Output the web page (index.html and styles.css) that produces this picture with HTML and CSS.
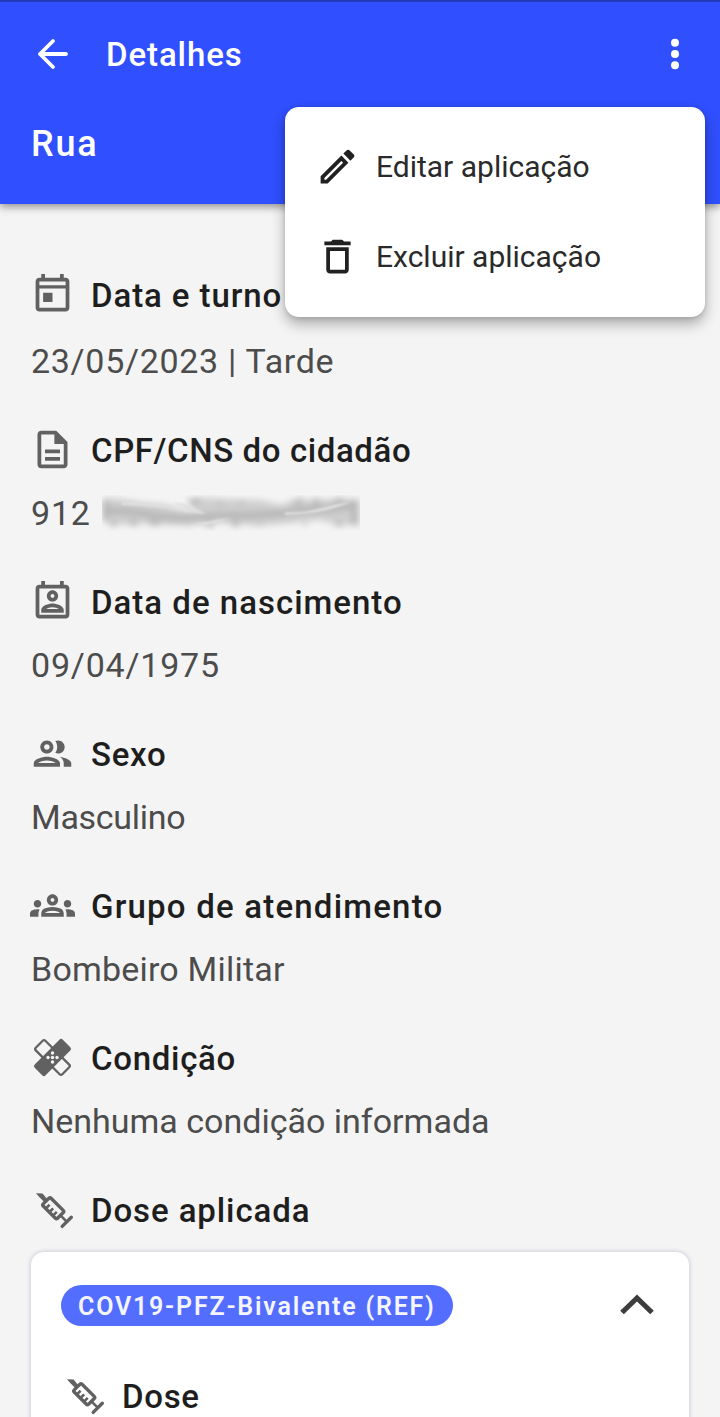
FILE: index.html
```html
<!DOCTYPE html>
<html lang="pt-BR">
<head>
<meta charset="utf-8">
<title>Detalhes</title>
<link rel="stylesheet" href="styles.css">
</head>
<body>
<svg class="defs" width="0" height="0" aria-hidden="true">
  <symbol id="syringe" viewBox="0 0 24 24">
    <g transform="translate(12 12) rotate(45)" fill="none" stroke="currentColor" stroke-width="1.8">
      <path d="M-12.4 .1L-9.8-2.3L-5.5-1.9V.3H-9.5Z" fill="currentColor" stroke="none"/>
      <rect x="-5.6" y="-3.7" width="10.8" height="5.9" rx=".8"/>
      <path d="M-2.9 1.9V-.7M-.2 1.9V-.7M2.5 1.9V-.7M5.2-.8H10.3" stroke-width="1.4"/>
      <path d="M10-4.2V2.7" stroke-linecap="round"/>
    </g>
  </symbol>
</svg>
<main class="screen">
  <header class="header">
    <div class="toolbar">
      <svg class="back" viewBox="0 0 32 32"><path d="M29 16H3M16 3L3 16L16 29"/></svg>
      <h1 class="title">Detalhes</h1>
      <svg class="more" viewBox="0 0 10 32"><circle cx="5" cy="4.7" r="4"/><circle cx="5" cy="16" r="4"/><circle cx="5" cy="27.2" r="4"/></svg>
    </div>
    <div class="place">Rua</div>
  </header>

  <div class="menu">
    <div class="item">
      <svg class="icon" viewBox="0 0 24 24"><path d="M3 17.25V21h3.75L17.81 9.94l-3.75-3.75L3 17.25zM5.92 19H5v-.92l9.06-9.06.92.92L5.92 19zM20.71 5.63l-2.34-2.34c-.2-.2-.45-.29-.71-.29s-.51.1-.7.29l-1.83 1.83 3.75 3.75 1.83-1.83c.39-.39.39-1.02 0-1.41z"/></svg>
      <span class="edit">Editar aplicação</span>
    </div>
    <div class="item">
      <svg class="icon" viewBox="0 0 24 24"><path d="M6 19c0 1.1.9 2 2 2h8c1.1 0 2-.9 2-2V7H6v12zM8 9h8v10H8V9zm7.5-5l-1-1h-5l-1 1H5v2h14V4h-3.5z"/></svg>
      <span class="delete">Excluir aplicação</span>
    </div>
  </div>

  <div class="content">
    <section class="field first">
      <div class="label">
        <svg class="icon" viewBox="0 0 24 24"><path fill-rule="evenodd" d="M19 3h-1V1h-2v2H8V1H6v2H5c-1.1 0-2 .9-2 2v14c0 1.1.9 2 2 2h14c1.1 0 2-.9 2-2V5c0-1.1-.9-2-2-2zM5 19V8.8h14V19zM5 7V5h14v2zM7 11h5v5H7z"/></svg>
        <span class="t1">Data e turno</span>
      </div>
      <div class="value v1">23/05/2023 | Tarde</div>
    </section>
    <section class="field">
      <div class="label">
        <svg class="icon" viewBox="0 0 24 24"><path d="M8 16h8v2H8zm0-4h8v2H8zm6-10H6c-1.1 0-2 .9-2 2v16c0 1.1.89 2 1.99 2H18c1.1 0 2-.9 2-2V8l-6-6zm4 18H6V4h7v5h5v11z"/></svg>
        <span class="t2">CPF/CNS do cidadão</span>
      </div>
      <div class="value v2">912
        <svg class="redacted" viewBox="0 0 258 36">
          <defs><filter id="smear" x="-10%" y="-40%" width="120%" height="180%"><feGaussianBlur stdDeviation="3"/></filter><filter id="soft"><feGaussianBlur stdDeviation="1.2"/></filter></defs>
          <g filter="url(#smear)">
            <path d="M0 4C18 1 30 8 60 9C75 12 78 16 92 16L84 4L104 3L158 5L180 10L190 5L258 4V31L232 29L218 25L180 29L154 31L112 27L87 31L44 29L10 30L0 26Z" fill="#cfcfcf"/>
            <path d="M4 6V24M88 7L98 5M118 7V10M139 6V9M192 8L201 5M211 8L217 5M233 7L240 4M252 6V29M9 29H14M28 27L35 29M48 28H57M104 29H112M130 29H137M158 29V31M203 28V30M234 29H240" fill="none" stroke="#b3b3b3" stroke-width="5"/>
            <path d="M5 16C38 14 55 25 87 23C125 18 155 23 190 17C212 13 234 16 251 9" fill="none" stroke="#b9b9b9" stroke-width="8"/>
          </g>
          <path d="M20 7C51 7 74 11 91 16L71 8C82 6 95 14 104 19C84 18 63 10 20 10M184 17C210 19 226 9 249 7C232 15 210 19 182 20M92 30C105 26 118 24 130 23C118 27 108 30 98 31" fill="#e0e0e0" filter="url(#soft)"/>
        </svg>
      </div>
    </section>
    <section class="field">
      <div class="label">
        <svg class="icon" viewBox="0 0 24 24"><path d="M19 3h-1V1h-2v2H8V1H6v2H5c-1.1 0-2 .9-2 2v14c0 1.1.9 2 2 2h14c1.1 0 2-.9 2-2V5c0-1.1-.9-2-2-2zm0 16H5V5h14v14zm-7-7c1.65 0 3-1.35 3-3s-1.35-3-3-3-3 1.35-3 3 1.35 3 3 3zm0-4c.55 0 1 .45 1 1s-.45 1-1 1-1-.45-1-1 .45-1 1-1zm6 8.58c0-2.5-3.97-3.58-6-3.58s-6 1.08-6 3.58V18h12v-1.42zM8.48 16c.74-.51 2.23-1 3.52-1s2.78.49 3.52 1H8.48z"/></svg>
        <span class="t3">Data de nascimento</span>
      </div>
      <div class="value v3">09/04/1975</div>
    </section>
    <section class="field">
      <div class="label">
        <svg class="icon" viewBox="0 0 24 24"><path d="M9 13.75c-2.34 0-7 1.17-7 3.5V19h14v-1.75c0-2.33-4.66-3.5-7-3.5zM4.34 17c.84-.58 2.87-1.25 4.66-1.25s3.82.67 4.66 1.25H4.34zM9 12c1.93 0 3.5-1.57 3.5-3.5S10.93 5 9 5 5.5 6.57 5.5 8.5 7.07 12 9 12zm0-5c.83 0 1.5.67 1.5 1.5S9.83 10 9 10s-1.5-.67-1.5-1.5S8.17 7 9 7zm7.04 6.81c1.16.84 1.96 1.96 1.96 3.44V19h4v-1.75c0-2.02-3.5-3.17-5.96-3.44zM15 12c1.93 0 3.5-1.57 3.5-3.5S16.93 5 15 5c-.54 0-1.04.13-1.5.35.63.89 1 1.98 1 3.15s-.37 2.26-1 3.15c.46.22.96.35 1.5.35z"/></svg>
        <span class="t4">Sexo</span>
      </div>
      <div class="value v4">Masculino</div>
    </section>
    <section class="field">
      <div class="label">
        <svg class="icon" viewBox="0 0 24 24"><path d="M4 13c1.1 0 2-.9 2-2s-.9-2-2-2-2 .9-2 2 .9 2 2 2zm1.13 1.1C4.76 14.04 4.39 14 4 14c-.99 0-1.93.21-2.78.58C.48 14.9 0 15.62 0 16.43V18h4.5v-1.61c0-.83.23-1.61.63-2.29zM20 13c1.1 0 2-.9 2-2s-.9-2-2-2-2 .9-2 2 .9 2 2 2zm4 3.43c0-.81-.48-1.53-1.22-1.85-.85-.37-1.79-.58-2.78-.58-.39 0-.76.04-1.13.1.4.68.63 1.46.63 2.29V18H24v-1.57zM16.24 13.65c-1.17-.52-2.61-.9-4.24-.9s-3.07.39-4.24.9C6.68 14.13 6 15.21 6 16.39V18h12v-1.61c0-1.18-.68-2.26-1.76-2.74zM8.07 16c.09-.23.13-.39.91-.69.97-.38 1.99-.56 3.02-.56s2.05.18 3.02.56c.77.3.81.46.91.69H8.07zM12 8c.55 0 1 .45 1 1s-.45 1-1 1-1-.45-1-1 .45-1 1-1m0-2c-1.66 0-3 1.34-3 3s1.34 3 3 3 3-1.34 3-3-1.34-3-3-3z"/></svg>
        <span class="t5">Grupo de atendimento</span>
      </div>
      <div class="value v5">Bombeiro Militar</div>
    </section>
    <section class="field">
      <div class="label">
        <svg class="icon" viewBox="0 0 24 24">
          <g transform="translate(12 12) rotate(45)"><rect x="-10" y="-3.6" width="20" height="7.2" rx="1" fill="none" stroke="currentColor" stroke-width="1.2"/></g>
          <g transform="translate(12 12) rotate(-45)"><rect x="-10.6" y="-4.1" width="21.2" height="8.2" rx="1.3"/></g>
          <g fill="#f4f4f4"><circle cx="12" cy="12" r=".9"/><circle cx="12" cy="9.6" r=".9"/><circle cx="12" cy="14.4" r=".9"/><circle cx="9.6" cy="12" r=".9"/><circle cx="14.4" cy="12" r=".9"/></g>
        </svg>
        <span class="t6">Condição</span>
      </div>
      <div class="value v6">Nenhuma condição informada</div>
    </section>
    <section class="dose">
      <div class="label">
        <svg class="icon"><use href="#syringe"/></svg>
        <span class="t7">Dose aplicada</span>
      </div>
      <div class="card">
        <div class="card-head">
          <span class="chip">COV19-PFZ-Bivalente (REF)</span>
          <svg class="chevron" viewBox="0 0 34 22"><path d="M2 18.5L17 4L32 18.5"/></svg>
        </div>
        <div class="label">
          <svg class="icon"><use href="#syringe"/></svg>
          <span class="t8">Dose</span>
        </div>
      </div>
    </section>
  </div>
</main>
</body>
</html>
```
FILE: styles.css
```css
* { box-sizing: border-box; }
body { margin: 0; font-family: Roboto, "Liberation Sans", sans-serif; background: #f4f4f4; color: #1e1e1e; }
.defs { position: absolute; }
.screen { position: relative; width: 720px; height: 1417px; overflow: hidden; }
svg { display: block; flex: none; }
span, .title, .place, .value { white-space: nowrap; }

.header { height: 204px; padding: 22px 30px 0 37px; background: #304ffe; border-top: 2px solid #253ab8; box-shadow: 0 3px 8px rgba(0, 0, 0, .4); color: #fff; }
.toolbar { display: flex; align-items: center; height: 60px; }
.back { width: 32px; height: 32px; fill: none; stroke: #fff; stroke-width: 3.8; stroke-linecap: round; stroke-linejoin: round; }
.title { flex: 1; margin: 0 0 0 37px; padding-top: 2px; font-size: 33px; line-height: 60px; font-weight: 500; letter-spacing: .9px; }
.more { width: 10px; height: 32px; margin-right: 10px; fill: #fff; }
.place { margin: 36px 0 0 -6px; font-size: 36px; line-height: 48px; font-weight: 500; letter-spacing: 1.8px; }

.menu { position: absolute; z-index: 2; left: 285px; top: 107px; width: 420px; height: 210px; padding: 14px 30px; border-radius: 14px; background: #fff; box-shadow: 0 7px 14px rgba(0, 0, 0, .3), 0 1px 5px rgba(0, 0, 0, .12); }
.item { display: flex; align-items: center; gap: 16px; height: 90px; font-size: 30px; font-weight: 400; color: #2a2a2a; }
.item .icon { color: #212121; }
.icon { width: 45px; height: 45px; fill: currentColor; }

.content { padding: 68px 30px 0; }
.field { height: 152px; }
.field.first { height: 155px; }
.label { display: flex; align-items: center; gap: 16px; height: 45px; font-size: 33px; font-weight: 500; }
.label span { padding-top: 2px; }
.label .icon { color: #616161; }
.value { display: flex; align-items: center; height: 45px; margin-top: 18px; padding-left: 1px; font-size: 34px; font-weight: 400; color: #4c4c4c; }
.first .value { margin-top: 21px; }
.redacted { width: 258px; height: 36px; margin-left: 11px; overflow: hidden; }

/* Per-string tracking */
.t1, .t7 { letter-spacing: .9px; }
.t2 { letter-spacing: .6px; }
.t3 { letter-spacing: 1px; }
.t4, .t6, .t8 { letter-spacing: .7px; }
.t5 { letter-spacing: 1.2px; }
.v1 { letter-spacing: .7px; }
.v2 { letter-spacing: .8px; }
.v3 { letter-spacing: .8px; }
.v4 { letter-spacing: -.3px; }
.v5 { letter-spacing: .2px; }

.card { height: 200px; margin: 20px 1px 0 1px; padding: 33px 30px; border-radius: 13px; background: #fff; box-shadow: 0 0 5px rgba(30, 30, 100, .25); }
.card-head { display: flex; align-items: center; justify-content: space-between; height: 41px; margin-bottom: 47px; padding-right: 5px; }
.chip { width: 392px; height: 41px; padding: 1px 0 0 17px; border-radius: 21px; background: #536dfe; color: #f4f5ff; font-size: 25px; line-height: 42px; font-weight: 600; letter-spacing: 1.8px; }
.chevron { width: 34px; height: 22px; margin-bottom: 2px; fill: none; stroke: #3d3d3d; stroke-width: 5.2; }
```
